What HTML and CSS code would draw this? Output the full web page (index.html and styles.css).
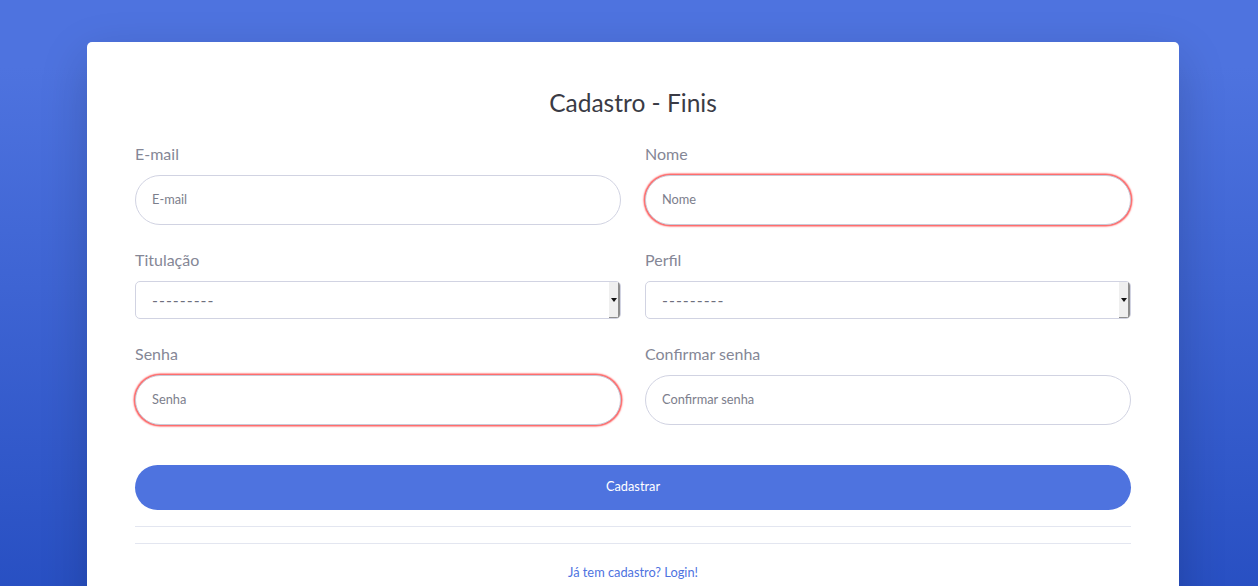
FILE: index.html
```html
<!DOCTYPE html>
<html lang="pt">
<head>
<meta charset="utf-8">
<title>Cadastro - Finis</title>
<link rel="stylesheet" href="styles.css">
</head>
<body>
<main class="page">
  <section class="card">
    <h1 class="title">Cadastro - Finis</h1>
    <form class="form">
      <div class="grid">
        <div class="field">
          <label class="label">E-mail</label>
          <input class="input" type="email" placeholder="E-mail">
        </div>
        <div class="field">
          <label class="label">Nome</label>
          <input class="input invalid" type="text" placeholder="Nome">
        </div>
        <div class="field">
          <label class="label">Titulação</label>
          <div class="select">
            <span class="select-text">---------</span>
            <span class="select-btn"><span class="caret"></span></span>
          </div>
        </div>
        <div class="field">
          <label class="label">Perfil</label>
          <div class="select">
            <span class="select-text">---------</span>
            <span class="select-btn"><span class="caret"></span></span>
          </div>
        </div>
        <div class="field">
          <label class="label">Senha</label>
          <input class="input invalid" type="password" placeholder="Senha">
        </div>
        <div class="field">
          <label class="label">Confirmar senha</label>
          <input class="input" type="password" placeholder="Confirmar senha">
        </div>
      </div>
      <button class="btn" type="button">Cadastrar</button>
      <hr class="rule first">
      <hr class="rule">
      <div class="links"><a class="link" href="#">Já tem cadastro? Login!</a></div>
    </form>
  </section>
</main>
</body>
</html>
```

FILE: styles.css
```css
html, body {
  margin: 0;
  padding: 0;
}
body {
  font-family: "Lato", "Noto Sans", sans-serif;
  color: #858796;
  background-color: #4e73df;
  background-image: linear-gradient(180deg, #4e73df 10%, #224abe 100%);
  min-height: 100vh;
}
.page {
  padding: 42px 79px 40px 87px;
}
.card {
  background: #fff;
  border-radius: 5px;
  box-shadow: 0 16px 48px rgba(0, 0, 0, 0.175);
  padding: 48px 48px 48px 48px;
}
.title {
  margin: 0 0 28px;
  text-align: center;
  font-size: 24.5px;
  line-height: 25px;
  font-weight: 400;
  color: #3a3b45;
}
.grid {
  display: grid;
  grid-template-columns: 1fr 1fr;
  column-gap: 24px;
  row-gap: 24px;
}
.field {
  display: flex;
  flex-direction: column;
}
.label {
  font-size: 16px;
  line-height: 22px;
  margin-bottom: 10px;
  color: #858796;
}
.input {
  box-sizing: border-box;
  height: 50px;
  border: 1px solid #d1d3e2;
  border-radius: 25px;
  padding: 0 16px 2px;
  font-family: inherit;
  font-size: 12.8px;
  color: #6e707e;
  background: #fff;
  outline: none;
}
.input::placeholder {
  color: #7c7e8c;
}
.input.invalid {
  border-color: #c8c9d6;
  box-shadow: 0 0 1.5px 1.5px #ff5c5c;
}
.select {
  box-sizing: border-box;
  height: 38px;
  border: 1px solid #d1d3e2;
  border-radius: 5px;
  display: flex;
  align-items: stretch;
  overflow: hidden;
  background: #fff;
}
.select-text {
  flex: 1;
  display: flex;
  align-items: center;
  padding: 0 0 2px 16px;
  font-size: 16px;
  letter-spacing: 1px;
  color: #6e707e;
}
.select-btn {
  width: 9px;
  background: #efefef;
  border-right: 2px solid #8d8d8d;
  border-bottom: 1px solid #8d8d8d;
  display: flex;
  align-items: center;
  justify-content: center;
}
.caret {
  width: 0;
  height: 0;
  border-left: 3px solid transparent;
  border-right: 3px solid transparent;
  border-top: 4px solid #111;
}
.btn {
  display: block;
  width: 100%;
  height: 45px;
  margin-top: 40px;
  padding: 0 0 3px;
  border: none;
  border-radius: 23px;
  background: #4e73df;
  color: #fff;
  font-family: inherit;
  font-size: 12.8px;
}
.rule {
  border: 0;
  border-top: 1px solid #e3e6f0;
  margin: 16px 0 0;
}
.links {
  margin-top: 16px;
  text-align: center;
  line-height: 22px;
}
.link {
  font-size: 12.8px;
  color: #4e73df;
  text-decoration: none;
}
```
